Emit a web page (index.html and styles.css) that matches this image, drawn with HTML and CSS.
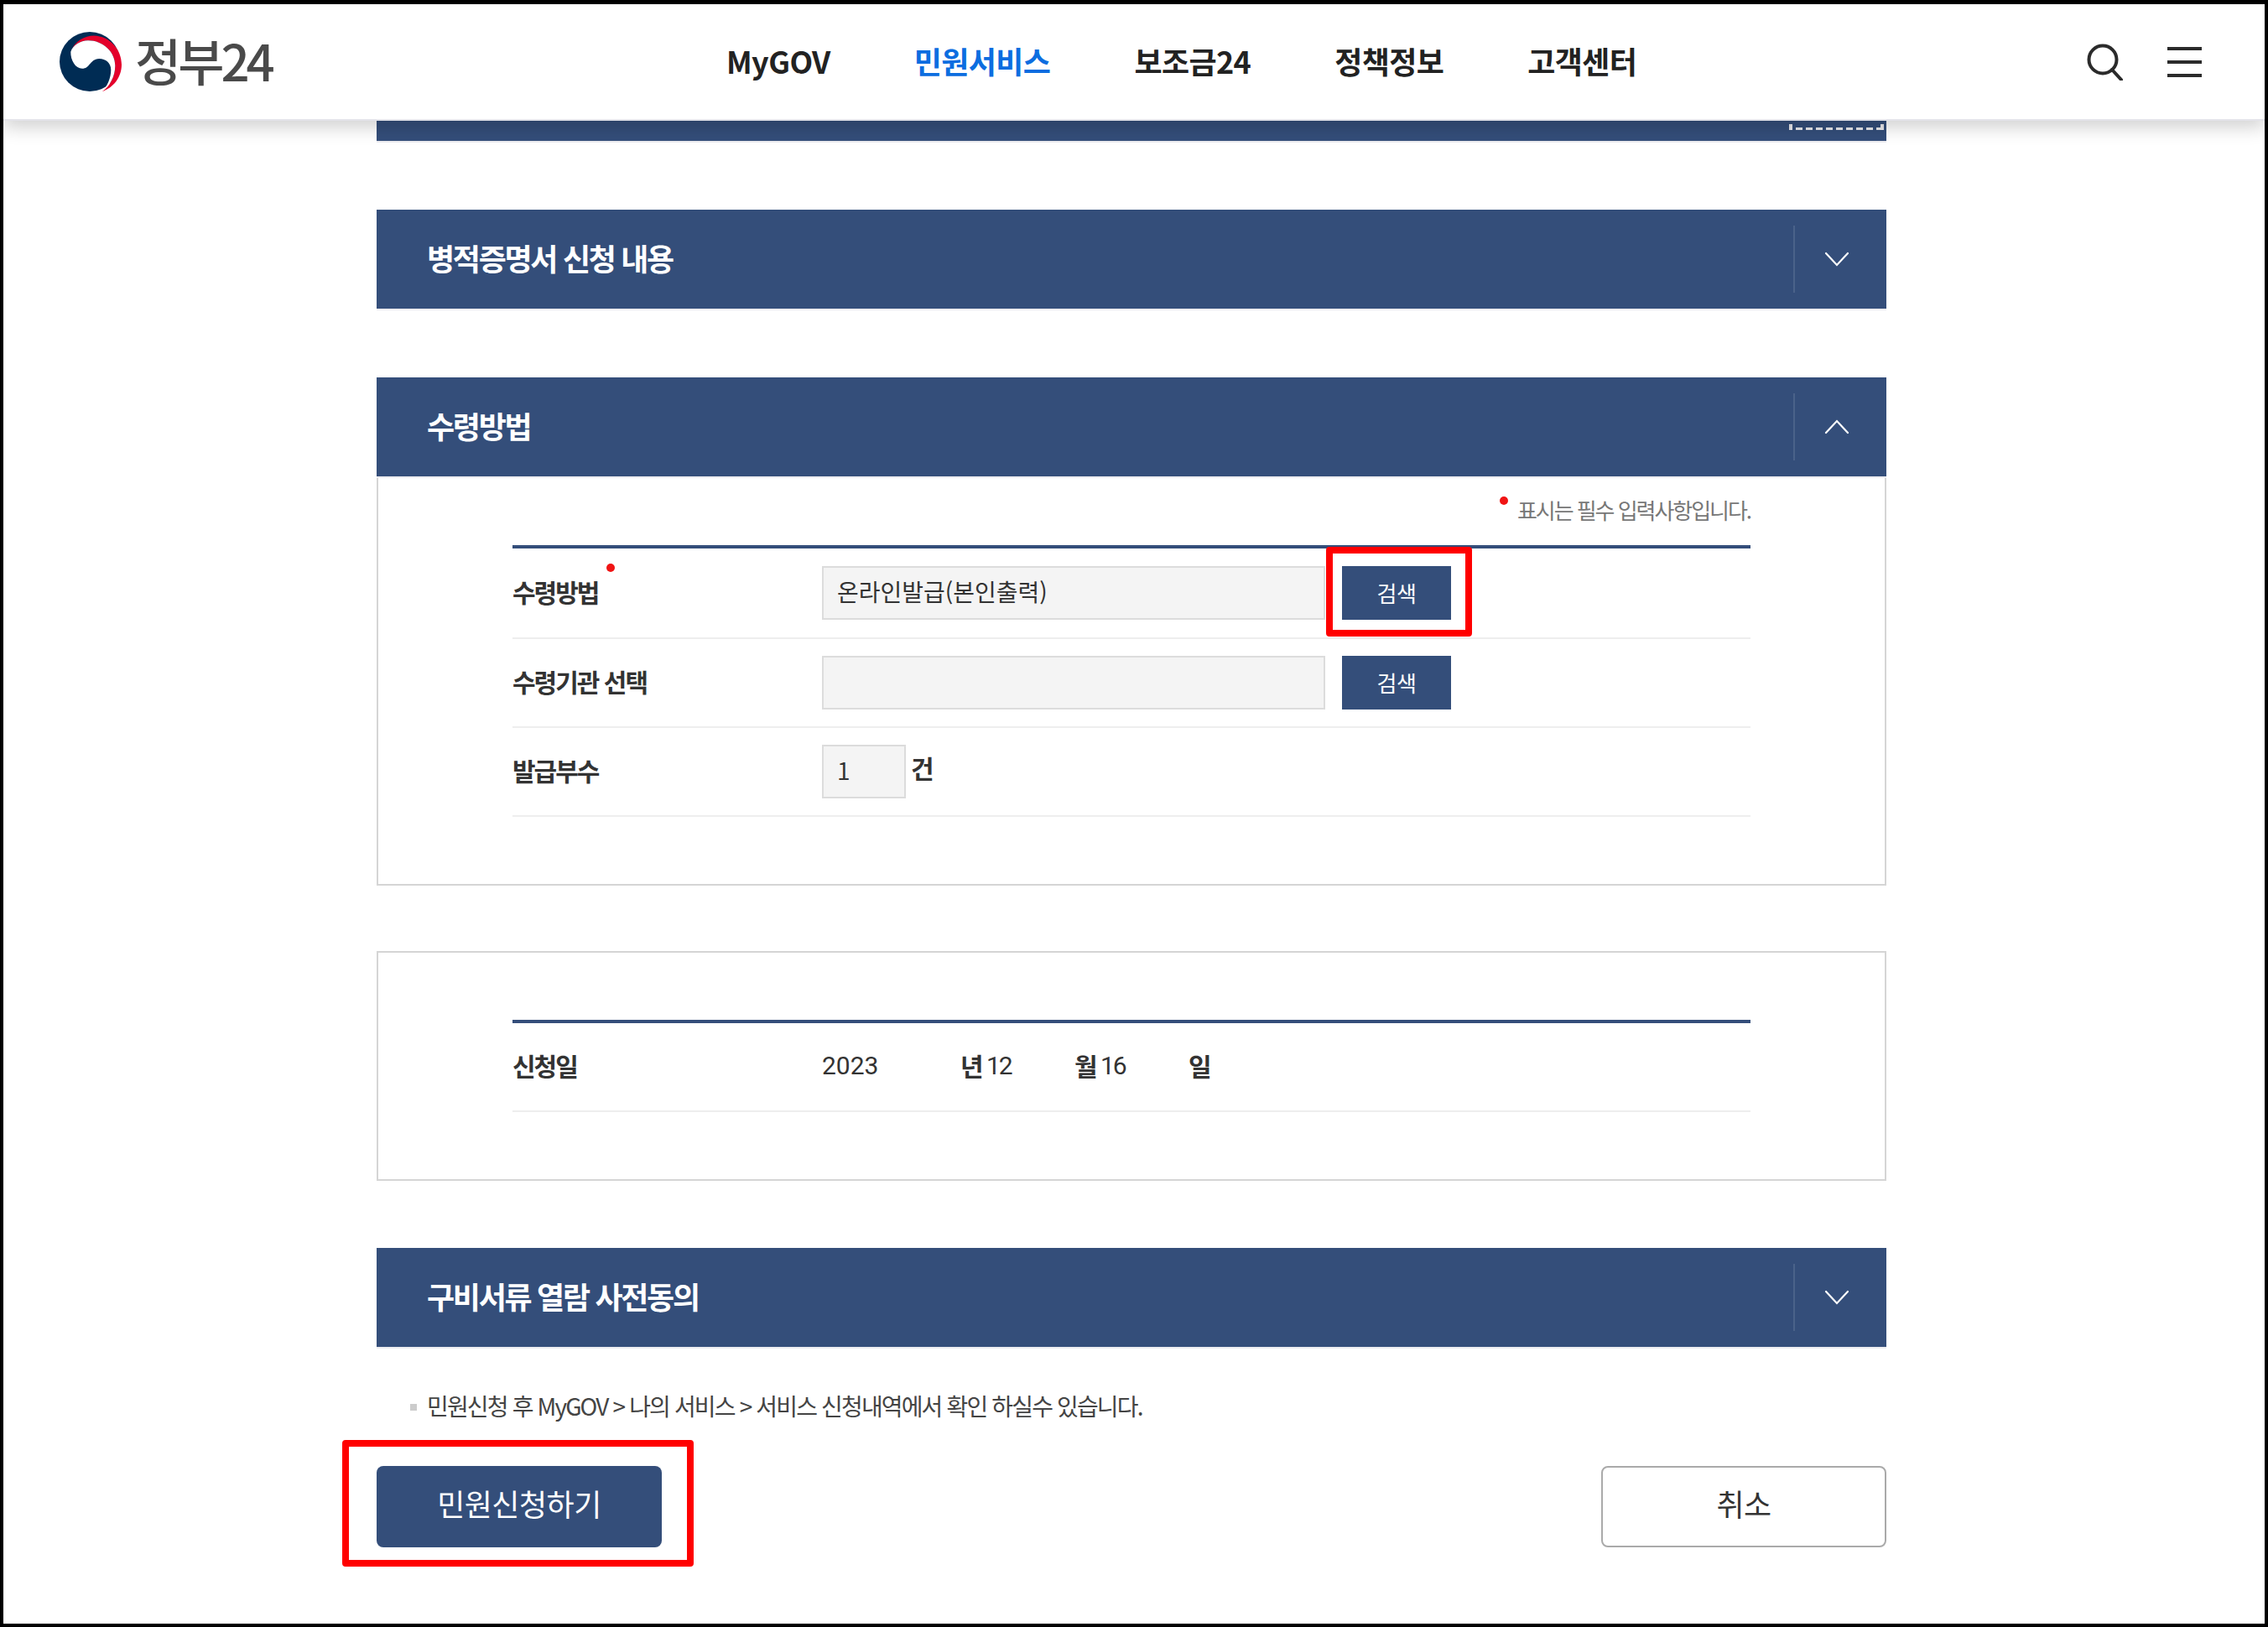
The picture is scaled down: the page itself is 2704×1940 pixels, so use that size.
FILE: index.html
```html
<!DOCTYPE html>
<html lang="ko">
<head>
<meta charset="utf-8">
<title>정부24</title>
<link rel="stylesheet" href="styles.css">
</head>
<body>
<div class="frame">
  <header class="topbar">
    <a class="logo">
      <svg class="logo-mark" viewBox="0 0 74 72" width="74" height="72" aria-hidden="true">
        <ellipse cx="36" cy="35.500" rx="36" ry="35.500" fill="#002c54"/>
        <path fill="#e4002b" d="M13.300 23.700C18 11 30 4.500 41 4.500 60 5 74 21 74 39 74 54 64 67 50.700 71 60 65 66.300 53 66.300 40.300 66.300 24 52 10.300 34 10.300 25 10.300 16 16 13.300 23.700Z"/>
        <path fill="#fff" d="M13.300 23.700C16 16 25 10.300 34 10.300 52 10.300 66.300 24 66.300 40.300 66.300 53 60 65 50.700 71 57 65 61.300 55 61.300 45.300 61.300 37 55 32 47.300 32 41 32 38.500 36 35.700 38.700 33.500 41.500 31.500 43.700 27 43.700 19 43.700 13 34 13.300 23.700Z"/>
      </svg>
      <span class="logo-text">정부24</span>
    </a>
    <nav class="gnb">
      <a>MyGOV</a>
      <a class="on">민원서비스</a>
      <a>보조금24</a>
      <a>정책정보</a>
      <a>고객센터</a>
    </nav>
    <div class="tools">
      <svg width="44" height="44" viewBox="0 0 44 44" aria-hidden="true"><circle cx="19" cy="19" r="16.500" fill="none" stroke="#2b2b2b" stroke-width="4"/><path d="M30 31l11 12" stroke="#2b2b2b" stroke-width="4" stroke-linecap="round" fill="none"/></svg>
      <svg width="41" height="36" viewBox="0 0 41 36" aria-hidden="true"><path d="M0 2h41M0 18h41M0 34h41" stroke="#2b2b2b" stroke-width="4" fill="none"/></svg>
    </div>
  </header>

  <main class="page">
    <div class="stub"><span class="focus-dash"></span></div>

    <section class="acc acc-first">
      <div class="acc-head">
        <h2>병적증명서 신청 내용</h2>
        <button class="acc-toggle" aria-label="펼치기"><svg width="30" height="18" viewBox="0 0 30 18"><path d="M2 2L15 16 28 2" fill="none" stroke="#fff" stroke-width="2.200" stroke-linecap="round"/></svg></button>
      </div>
    </section>

    <section class="acc acc-open">
      <div class="acc-head">
        <h2>수령방법</h2>
        <button class="acc-toggle" aria-label="접기"><svg width="30" height="18" viewBox="0 0 30 18"><path d="M2 16L15 2 28 16" fill="none" stroke="#fff" stroke-width="2.200" stroke-linecap="round"/></svg></button>
      </div>
      <div class="panel panel-method">
        <p class="req-note"><i class="dot"></i>표시는 필수 입력사항입니다.</p>
        <div class="form-table">
          <div class="row row-first">
            <div class="label">수령방법<i class="dot dot-label"></i></div>
            <div class="field"><span class="input wide">온라인발급(본인출력)</span><button class="search marked">검색</button></div>
          </div>
          <div class="row">
            <div class="label">수령기관 선택</div>
            <div class="field"><span class="input wide"></span><button class="search">검색</button></div>
          </div>
          <div class="row">
            <div class="label">발급부수</div>
            <div class="field"><span class="input count">1</span><span class="unit">건</span></div>
          </div>
        </div>
      </div>
    </section>

    <section class="panel panel-date">
      <div class="form-table">
        <div class="row">
          <div class="label">신청일</div>
          <div class="field date">
            <span class="num n-year">2023</span><b class="du d-year">년</b><span class="num n-month">12</span><b class="du d-month">월</b><span class="num n-day">16</span><b class="du">일</b>
          </div>
        </div>
      </div>
    </section>

    <section class="acc acc-last">
      <div class="acc-head">
        <h2>구비서류 열람 사전동의</h2>
        <button class="acc-toggle" aria-label="펼치기"><svg width="30" height="18" viewBox="0 0 30 18"><path d="M2 2L15 16 28 2" fill="none" stroke="#fff" stroke-width="2.200" stroke-linecap="round"/></svg></button>
      </div>
    </section>

    <p class="notice">민원신청 후 MyGOV &gt; 나의 서비스 &gt; 서비스 신청내역에서 확인 하실수 있습니다.</p>

    <div class="actions">
      <button class="btn primary marked-wide">민원신청하기</button>
      <button class="btn ghost">취소</button>
    </div>
  </main>
</div>
</body>
</html>
```
FILE: styles.css
```css
*, *::before, *::after { box-sizing: border-box; }
html, body { margin: 0; padding: 0; background: #fff; }
body {
  font-family: "Noto Sans CJK KR", "Noto Sans", "Liberation Sans", sans-serif;
  color: #333;
}
.frame {
  width: 2704px;
  height: 1940px;
  border: 4px solid #000;
  border-top-width: 5px;
  overflow: hidden;
  background: #fff;
}
button { font-family: inherit; border: 0; padding: 0; cursor: pointer; }

.topbar {
  position: relative;
  z-index: 2;
  height: 139px;
  display: flex;
  align-items: center;
  background: #fff;
  border-bottom: 2px solid #e4e4ea;
  box-shadow: 0 8px 20px rgba(0, 0, 0, .18);
  padding: 0 75px 0 67px;
}
.logo { display: flex; align-items: center; gap: 16px; width: 795px; flex: none; margin-top: 1px; }
.logo-mark { display: block; }
.logo-text {
  font-size: 60px;
  font-weight: 500;
  line-height: 60px;
  color: #4a4a4a;
  letter-spacing: -4px;
  margin-top: -6px;
}
.gnb { display: flex; gap: 100px; flex: 1; margin-top: -3px; }
.gnb a {
  font-size: 36px;
  font-weight: 700;
  line-height: 48px;
  color: #222;
  letter-spacing: -.6px;
}
.gnb a.on { color: #0c6de0; }
.tools { display: flex; align-items: center; gap: 52px; }

.page { width: 1800px; margin: 0 0 0 445px; position: relative; }

.stub {
  height: 24px;
  background: #344e7a;
  box-shadow: 0 2px 0 #ececf0;
  position: relative;
}
.focus-dash {
  position: absolute;
  right: 3px;
  top: 4px;
  width: 113px;
  height: 7px;
  border-left: 4px solid #e8e8ec;
  border-right: 4px solid #e8e8ec;
  background: linear-gradient(90deg, #e8e8ec 8px, transparent 8px) 4px 100% / 12px 3px repeat-x;
}

.acc-first { margin-top: 82px; }
.acc-open { margin-top: 82px; }
.acc-last { margin-top: 80px; }
.acc-head {
  height: 118px;
  background: #344e7a;
  display: flex;
  align-items: center;
  justify-content: space-between;
  padding-left: 60px;
  box-shadow: 0 2px 0 #ececf0;
  position: relative;
}
.acc-head h2 {
  margin: 0 0 4px;
  font-size: 36px;
  font-weight: 700;
  color: #fff;
  letter-spacing: -2.300px;
  line-height: 50px;
}
.acc-toggle {
  width: 111px;
  height: 80px;
  background: none;
  border-left: 2px solid #4a6289;
  padding-right: 10px;
  display: flex;
  align-items: center;
  justify-content: center;
}

.panel { border: 2px solid #d5d5d5; background: #fff; }
.panel-method { height: 488px; padding: 0 160px; }
.panel-date { margin-top: 78px; height: 274px; padding: 80px 160px 0; }

.req-note {
  margin: 0;
  height: 80px;
  padding-top: 20px;
  text-align: right;
  font-size: 26px;
  line-height: 36px;
  color: #777;
  letter-spacing: -2.050px;
  position: relative;
}
.dot {
  display: inline-block;
  width: 10px;
  height: 10px;
  border-radius: 50%;
  background: #f01414;
  margin-right: 11px;
  vertical-align: 17px;
}
.dot-label {
  position: absolute;
  left: 112px;
  top: -13px;
  margin: 0;
}

.form-table { border-top: 4px solid #344e7a; }
.row {
  height: 106px;
  border-bottom: 2px solid #eeeeee;
  display: flex;
  align-items: center;
}
.row-first { height: 108px; }
.label {
  position: relative;
  width: 369px;
  flex: none;
  font-size: 30px;
  font-weight: 700;
  color: #333;
  letter-spacing: -2px;
  line-height: 40px;
  margin-bottom: 5px;
}
.field { display: flex; align-items: flex-start; }
.input {
  display: block;
  height: 64px;
  background: #f4f4f4;
  border: 2px solid #dcdcdc;
  font-size: 28px;
  line-height: 56px;
  padding-left: 16px;
  color: #333;
}
.input.wide { width: 600px; }
.input.count { width: 100px; }
.unit {
  margin-left: 6px;
  font-size: 30px;
  font-weight: 700;
  line-height: 54px;
  color: #333;
}
.search {
  position: relative;
  width: 130px;
  height: 64px;
  margin-left: 20px;
  padding-bottom: 2px;
  background: #344e7a;
  color: #fff;
  font-size: 26px;
  letter-spacing: -.5px;
}
.search.marked::after {
  content: "";
  position: absolute;
  left: -19px;
  top: -23px;
  width: 174px;
  height: 107px;
  border: 8px solid #ff0000;
  border-radius: 4px;
}

.date { align-items: center; line-height: 40px; color: #333; margin-bottom: 5px; }
.num { display: block; font-family: Roboto, "Noto Sans", sans-serif; font-size: 30px; margin-top: 3px; }
.du { font-size: 30px; font-weight: 700; letter-spacing: -1px; }
.n-year { width: 165px; }
.d-year { width: 31px; }
.n-month { width: 105px; letter-spacing: -2px; }
.d-month { width: 31px; }
.n-day { width: 105px; letter-spacing: -2px; }

.notice {
  margin: 50px 0 0;
  padding-left: 60px;
  font-size: 28px;
  line-height: 40px;
  color: #444;
  letter-spacing: -1.850px;
  position: relative;
}
.notice::before {
  content: "";
  position: absolute;
  left: 40px;
  top: 18px;
  width: 8px;
  height: 8px;
  background: #ccc;
}

.actions { display: flex; justify-content: space-between; margin-top: 52px; }
.btn {
  position: relative;
  width: 340px;
  height: 97px;
  border-radius: 8px;
  font-size: 36px;
  letter-spacing: -.5px;
  padding-bottom: 9px;
}
.primary { background: #344e7a; color: #fff; }
.ghost { background: #fff; color: #333; border: 2px solid #aaaaaa; }
.marked-wide::after {
  content: "";
  position: absolute;
  left: -41px;
  top: -31px;
  width: 419px;
  height: 151px;
  border: 8px solid #ff0000;
  border-radius: 4px;
}
```
